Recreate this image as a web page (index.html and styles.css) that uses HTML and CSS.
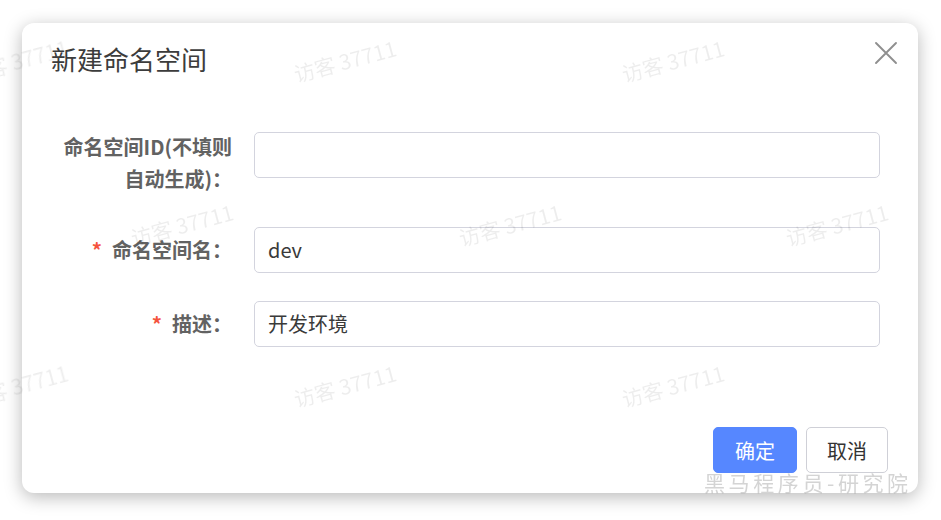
FILE: index.html
```html
<!DOCTYPE html>
<html lang="zh-CN">
<head>
<meta charset="utf-8">
<title>新建命名空间</title>
<link rel="stylesheet" href="styles.css">
</head>
<body>
<div class="dialog">
  <div class="dialog-header">
    <span class="dialog-title">新建命名空间</span>
    <button class="dialog-close" aria-label="关闭">
      <svg width="24" height="24" viewBox="0 0 24 24"><path d="M2 2 L22 22 M22 2 L2 22" stroke="#8f8f8f" stroke-width="1.9" fill="none" stroke-linecap="round"/></svg>
    </button>
  </div>
  <div class="dialog-body">
    <div class="form-item tall">
      <label class="form-label wrap">命名空间ID(不填则自动生成)：</label>
      <div class="form-control"><div class="input"></div></div>
    </div>
    <div class="form-item">
      <label class="form-label"><span class="req">*</span>命名空间名：</label>
      <div class="form-control"><div class="input">dev</div></div>
    </div>
    <div class="form-item">
      <label class="form-label"><span class="req">*</span>描述：</label>
      <div class="form-control"><div class="input">开发环境</div></div>
    </div>
  </div>
  <div class="dialog-footer">
    <button class="btn btn-primary">确定</button>
    <button class="btn btn-default">取消</button>
  </div>
</div>

<div class="watermarks">
  <span class="wm wm-1">访客 37711</span>
  <span class="wm wm-2">访客 37711</span>
  <span class="wm wm-3">访客 37711</span>
  <span class="wm wm-4">访客 37711</span>
  <span class="wm wm-5">访客 37711</span>
  <span class="wm wm-6">访客 37711</span>
  <span class="wm wm-7">访客 37711</span>
  <span class="wm wm-8">访客 37711</span>
  <span class="wm wm-9">访客 37711</span>
  <span class="brand">黑马程序员-研究院</span>
</div>
</body>
</html>
```

FILE: styles.css
```css
* { box-sizing: border-box; }

html, body {
  margin: 0;
  padding: 0;
  background: #ffffff;
  width: 941px;
  height: 520px;
  overflow: hidden;
  font-family: "Noto Sans CJK SC", "Noto Sans", sans-serif;
}

body {
  padding: 23px 0 0 22px;
}

.dialog {
  width: 896px;
  height: 470px;
  background: #fff;
  border-radius: 12px;
  box-shadow: 0 4px 18px rgba(0, 0, 0, 0.28);
  display: flex;
  flex-direction: column;
}

.dialog-header {
  display: flex;
  justify-content: space-between;
  align-items: flex-start;
  padding: 18px 20px 0 29px;
}

.dialog-title {
  font-size: 26px;
  line-height: 36px;
  color: #3c3c3c;
}

.dialog-close {
  margin-top: 0;
  width: 24px;
  height: 24px;
  padding: 0;
  border: 0;
  background: none;
  display: block;
}
.dialog-close svg { display: block; }

.dialog-body {
  padding: 55px 38px 0 30px;
}

.form-item {
  display: flex;
  align-items: flex-start;
  margin-bottom: 28px;
}
.form-item.tall { margin-bottom: 32px; }

.form-label {
  width: 202px;
  flex: none;
  padding-right: 22px;
  text-align: right;
  font-size: 20px;
  font-weight: 700;
  color: #626262;
  line-height: 46px;
}
.form-label.wrap { line-height: 32px; margin-top: -1px; }

.req {
  color: #f5533d;
  margin-right: 10px;
  font-weight: 700;
}

.form-control { flex: 1; }

.input {
  height: 46px;
  border: 1px solid #d3d4de;
  border-radius: 5px;
  padding: 0 13px;
  font-size: 20px;
  line-height: 44px;
  color: #3a3a3a;
}

.dialog-footer {
  margin-top: auto;
  display: flex;
  justify-content: flex-end;
  gap: 9px;
  padding: 0 30px 20px 0;
}

.btn {
  height: 46px;
  border-radius: 5px;
  font-family: inherit;
  font-size: 20px;
  padding: 0;
}
.btn-primary {
  width: 84px;
  background: #5687ff;
  border: 1px solid #5687ff;
  color: #fff;
}
.btn-default {
  width: 82px;
  background: #fff;
  border: 1px solid #cfd0d7;
  color: #333;
}

.watermarks {
  position: fixed;
  inset: 0;
  pointer-events: none;
}

.wm {
  position: absolute;
  font-size: 21px;
  line-height: 1;
  white-space: nowrap;
  color: rgba(0, 0, 0, 0.07);
  transform: translate(-50%, -50%) rotate(-15deg);
}
.wm-1 { left: 17px;  top: 61px; }
.wm-2 { left: 345px; top: 61px; }
.wm-3 { left: 673px; top: 61px; }
.wm-4 { left: 182px; top: 225px; }
.wm-5 { left: 510px; top: 225px; }
.wm-6 { left: 837px; top: 225px; }
.wm-7 { left: 17px;  top: 386px; }
.wm-8 { left: 345px; top: 386px; }
.wm-9 { left: 673px; top: 386px; }

.brand {
  position: absolute;
  left: 704px;
  top: 470px;
  font-size: 21px;
  line-height: 24px;
  letter-spacing: 3.6px;
  white-space: nowrap;
  color: rgba(170, 170, 170, 0.5);
}
```
